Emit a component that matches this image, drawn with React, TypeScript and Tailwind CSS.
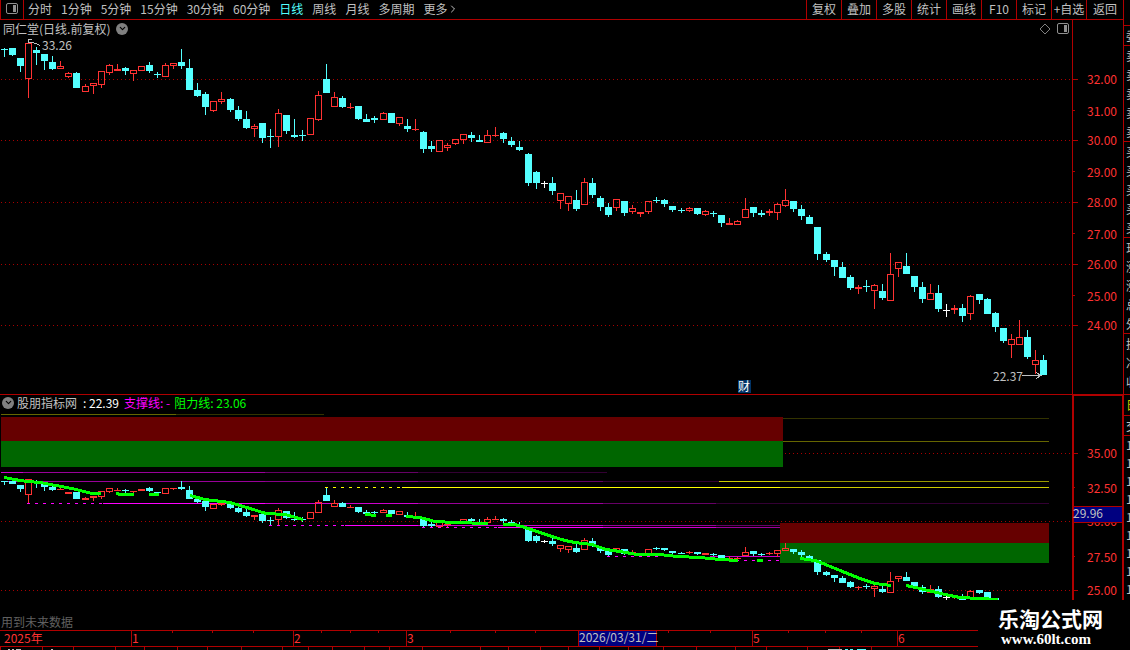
import type { ReactNode } from "react";
import { ChevronDown, ChevronRight } from "lucide-react";

const periods = [
  "分时",
  "1分钟",
  "5分钟",
  "15分钟",
  "30分钟",
  "60分钟",
  "日线",
  "周线",
  "月线",
  "多周期",
];

const tools = ["复权", "叠加", "多股", "统计", "画线", "F10", "标记", "+自选"];

// [wick top, wick bottom, body top, body bottom, kind]
type Kind = "u" | "d" | "w";
type Candle = [number, number, number, number, Kind];

const candles: Candle[] = [
  [48, 57, 49, 50, "d"],
  [48, 56, 48, 55, "d"],
  [58, 72, 58, 66, "d"],
  [43, 98, 43, 79, "u"],
  [47, 65, 50, 53, "d"],
  [54, 70, 54, 61, "d"],
  [56, 70, 62, 69, "d"],
  [61, 69, 66, 69, "u"],
  [72, 78, 73, 77, "u"],
  [72, 88, 73, 88, "d"],
  [84, 92, 86, 92, "u"],
  [83, 94, 83, 86, "u"],
  [71, 88, 71, 85, "u"],
  [64, 75, 65, 73, "u"],
  [64, 71, 69, 71, "u"],
  [67, 75, 68, 71, "d"],
  [70, 81, 70, 74, "u"],
  [66, 71, 66, 71, "u"],
  [62, 73, 65, 71, "d"],
  [72, 78, 74, 75, "d"],
  [63, 77, 65, 77, "u"],
  [63, 69, 63, 66, "u"],
  [49, 69, 62, 66, "d"],
  [59, 90, 68, 90, "d"],
  [83, 97, 90, 96, "d"],
  [92, 115, 94, 107, "d"],
  [101, 112, 101, 111, "u"],
  [92, 104, 99, 102, "u"],
  [98, 112, 99, 110, "d"],
  [106, 121, 110, 119, "d"],
  [111, 129, 119, 128, "d"],
  [124, 137, 126, 129, "u"],
  [123, 143, 123, 138, "d"],
  [129, 148, 136, 137, "d"],
  [109, 147, 113, 137, "u"],
  [115, 134, 115, 131, "d"],
  [119, 138, 135, 137, "d"],
  [130, 141, 135, 136, "d"],
  [118, 135, 118, 135, "u"],
  [91, 121, 95, 120, "u"],
  [64, 93, 79, 93, "d"],
  [92, 107, 97, 107, "u"],
  [96, 108, 98, 107, "d"],
  [103, 109, 107, 108, "u"],
  [106, 120, 106, 119, "d"],
  [114, 122, 119, 122, "d"],
  [116, 123, 118, 120, "d"],
  [112, 120, 113, 120, "u"],
  [113, 123, 113, 123, "d"],
  [117, 126, 117, 124, "u"],
  [119, 132, 126, 129, "d"],
  [119, 131, 129, 130, "u"],
  [131, 153, 132, 149, "d"],
  [141, 152, 146, 149, "d"],
  [140, 152, 140, 152, "u"],
  [143, 151, 145, 148, "u"],
  [139, 145, 139, 144, "u"],
  [134, 144, 134, 140, "u"],
  [132, 142, 135, 138, "d"],
  [135, 142, 140, 142, "d"],
  [130, 143, 135, 143, "u"],
  [127, 137, 135, 136, "u"],
  [132, 143, 133, 139, "d"],
  [137, 147, 141, 145, "d"],
  [141, 151, 147, 150, "d"],
  [153, 186, 154, 183, "d"],
  [171, 189, 172, 183, "d"],
  [181, 188, 183, 184, "w"],
  [177, 195, 183, 191, "d"],
  [193, 209, 193, 201, "u"],
  [196, 211, 196, 204, "u"],
  [190, 211, 200, 209, "d"],
  [178, 205, 182, 205, "u"],
  [178, 198, 183, 195, "d"],
  [196, 211, 198, 207, "d"],
  [203, 217, 207, 215, "d"],
  [199, 211, 199, 208, "u"],
  [201, 216, 201, 213, "d"],
  [205, 214, 208, 212, "u"],
  [212, 217, 212, 214, "u"],
  [201, 214, 201, 212, "u"],
  [197, 203, 200, 201, "d"],
  [199, 207, 200, 204, "d"],
  [206, 212, 206, 210, "d"],
  [208, 213, 210, 211, "d"],
  [207, 212, 208, 211, "u"],
  [208, 215, 208, 214, "d"],
  [210, 216, 211, 215, "u"],
  [211, 217, 213, 214, "d"],
  [215, 227, 215, 223, "d"],
  [218, 225, 223, 225, "u"],
  [220, 225, 221, 225, "u"],
  [198, 218, 209, 218, "u"],
  [207, 217, 207, 213, "d"],
  [210, 217, 213, 215, "d"],
  [209, 216, 211, 213, "u"],
  [203, 220, 204, 213, "u"],
  [189, 207, 200, 206, "u"],
  [201, 212, 201, 209, "d"],
  [205, 220, 209, 216, "d"],
  [215, 224, 217, 224, "d"],
  [227, 260, 227, 254, "d"],
  [252, 262, 254, 260, "d"],
  [260, 276, 260, 267, "d"],
  [262, 278, 267, 278, "d"],
  [275, 290, 277, 288, "d"],
  [285, 294, 287, 289, "u"],
  [280, 292, 286, 287, "d"],
  [284, 309, 285, 291, "u"],
  [284, 300, 291, 298, "d"],
  [253, 301, 274, 301, "u"],
  [262, 277, 262, 269, "u"],
  [253, 274, 266, 274, "d"],
  [276, 292, 276, 287, "d"],
  [282, 303, 287, 299, "d"],
  [284, 300, 293, 300, "u"],
  [285, 312, 293, 309, "d"],
  [304, 317, 310, 311, "w"],
  [305, 314, 308, 310, "u"],
  [304, 322, 308, 316, "d"],
  [295, 320, 296, 314, "u"],
  [294, 304, 294, 300, "d"],
  [298, 314, 299, 314, "d"],
  [312, 332, 313, 327, "d"],
  [328, 343, 328, 341, "d"],
  [334, 358, 339, 345, "u"],
  [320, 345, 337, 345, "u"],
  [330, 359, 337, 357, "d"],
  [350, 374, 360, 365, "u"],
  [355, 375, 360, 375, "d"],
];

const kindColor: Record<Kind, string> = {
  u: "#ff3232",
  d: "#54ffff",
  w: "#ffffff",
};

// [label, tick y, label baseline, major]
type Tick = [string, number, number, boolean];

const priceTicks: Tick[] = [
  ["32.00", 79, 84, true],
  ["31.00", 110, 116, false],
  ["30.00", 140, 145, true],
  ["29.00", 171, 177, false],
  ["28.00", 202, 207, true],
  ["27.00", 233, 239, false],
  ["26.00", 264, 269, true],
  ["25.00", 295, 301, false],
  ["24.00", 325, 330, true],
];

const indicatorTicks: Tick[] = [
  ["35.00", 453, 458, true],
  ["32.50", 487, 493, false],
  ["30.00", 521, 526, true],
  ["27.50", 556, 562, false],
  ["25.00", 590, 595, true],
];

// [x1, x2, y, color]
type Level = [number, number, number, string];

const levels: Level[] = [
  [1, 176, 414, "#666600"],
  [176, 324, 414, "#333300"],
  [783, 1049, 418, "#333300"],
  [783, 1049, 441, "#666600"],
  [1, 23, 472, "#cc00cc"],
  [23, 265, 472, "#990099"],
  [265, 418, 472, "#660066"],
  [418, 607, 472, "#330033"],
  [1, 23, 481, "#cc00cc"],
  [23, 265, 481, "#990099"],
  [265, 418, 481, "#880088"],
  [418, 603, 481, "#660066"],
  [603, 719, 481, "#330033"],
  [719, 780, 481, "#cccc00"],
  [780, 1049, 481, "#999900"],
  [402, 780, 487, "#ffff00"],
  [780, 1049, 487, "#cccc00"],
  [103, 265, 503, "#ff00ff"],
  [265, 418, 503, "#cc00cc"],
  [418, 603, 503, "#990099"],
  [603, 716, 503, "#660066"],
  [716, 1049, 503, "#330033"],
  [345, 418, 525, "#ff00ff"],
  [418, 603, 525, "#cc00cc"],
  [603, 716, 525, "#990099"],
  [716, 780, 525, "#660066"],
  [498, 603, 527, "#ff00ff"],
  [603, 716, 527, "#cc00cc"],
  [716, 780, 527, "#990099"],
  [710, 780, 556, "#cc00cc"],
];

const dashedLevels: Level[] = [
  [325, 401, 487, "#ffff00"],
  [27, 102, 503, "#ff00ff"],
  [269, 344, 525, "#ff00ff"],
  [422, 497, 527, "#ff00ff"],
  [607, 662, 556, "#ff00ff"],
  [728, 780, 560, "#ff00ff"],
];

const trendLines = [
  "4,477.5 20,480.5 28,481.5 40,482.5 72,488.5 92,493.5 101,493.5",
  "116,493.5 121,494.5 134,494.5",
  "149,494.5 159,494.5",
  "190,495.5 205,499.5 230,502.5 250,508.5 266,513.5 285,514.5 303,519.5",
  "365,514.5 376,515.5",
  "386,515.5 392,515.5",
  "406,516.5 420,517.5 435,521.5 455,522.5 488,523.5",
  "503,524.5 515,524.5 525,527.5 540,532.5 552,536.5 565,540.5 575,542.5 592,544.5 606,549.5 620,551.5 637,554.5 660,554.5 677,556.5 700,557.5 720,559.5 738,560.5",
  "757,560.5 763,560.5",
  "800,558.5 815,560.5 823,563.5 840,570.5 860,578.5 875,583.5 891,585.5",
  "906,585.5 920,588.5 945,594.5 960,597.5 980,598.5 998,599.5",
];

const months: [string, number][] = [
  ["1", 131],
  ["2", 293],
  ["3", 406],
  ["5", 752],
  ["6", 897],
];
const weekTicks = [172, 212, 253, 321, 350, 378, 450, 495, 535, 668, 710, 788, 825, 861];
const footTicks = [
  0, 42, 73, 115, 144, 177, 207, 241, 282, 308, 332, 364, 389, 422, 480, 508, 540, 568, 599, 628,
  663, 696, 735, 766, 807, 839, 871,
];

const toIndicator = (y: number) => Math.round(590.3 + (y - 295) * 0.443);

const Candles = ({ project = (y: number) => y }: { project?: (y: number) => number }) => (
  <g>
    {candles.map(([high, low, open, close, kind], i) => {
      const x = Math.round(4 + i * 8.054);
      const top = project(open);
      const bottom = Math.max(project(close), top + 1);
      const wickTop = project(high);
      const wickBottom = project(low);
      const color = kindColor[kind];
      const hollow = kind === "u" && bottom - top > 2;
      return (
        <g key={i} fill={color}>
          {wickTop < top && <rect x={x} y={wickTop} width={1} height={top - wickTop} />}
          {wickBottom > bottom && <rect x={x} y={bottom} width={1} height={wickBottom - bottom} />}
          {hollow ? (
            <rect x={x - 2.5} y={top + 0.5} width={6} height={bottom - top - 1} fill="none" stroke={color} />
          ) : (
            <rect x={x - 3} y={top} width={7} height={bottom - top} />
          )}
        </g>
      );
    })}
  </g>
);

const Grid = ({ ticks }: { ticks: Tick[] }) => (
  <g>
    {ticks.map(([label, y, , major]) =>
      major ? (
        <line key={label} x1={1} x2={1072} y1={y + 0.5} y2={y + 0.5} stroke="#a80000" strokeDasharray="1 3" />
      ) : null
    )}
  </g>
);

const AxisLabels = ({ ticks }: { ticks: Tick[] }) => (
  <g>
    {ticks.map(([label, y, baseline, major]) => (
      <g key={label}>
        <rect x={1073} y={y} width={major ? 5 : 2} height={1} fill="#b00000" />
        <text x={1087} y={baseline} fill="#ff3232">
          {label}
        </text>
      </g>
    ))}
  </g>
);

const MenuDot = ({ label }: { label: string }) => (
  <button aria-label={label} className="flex size-3 items-center justify-center rounded-full bg-[#808080] text-black">
    <ChevronDown size={9} strokeWidth={3} />
  </button>
);

const PanelIcon = ({ color }: { color: string }) => (
  <svg width="12" height="11" viewBox="0 0 12 11" fill="none">
    <rect x="0.5" y="0.5" width="11" height="10" rx="1.5" stroke={color} />
    <rect x="7" y="2" width="3" height="7" fill={color} />
  </svg>
);

const PriceChart = () => (
  <svg viewBox="0 39 1123 355" className="block h-auto w-full text-[12px]" shapeRendering="crispEdges">
    <Grid ticks={priceTicks} />
    <rect x={1072} y={39} width={1} height={355} fill="#b00000" />
    <AxisLabels ticks={priceTicks} />
    <Candles />

    {/* highest and lowest price */}
    <path d="M32 39.5H28.5V43M28 42.5H32L36 43.5L40 45.5" stroke="#c0c0c0" fill="none" />
    <text x={42} y={50} fill="#c0c0c0">33.26</text>
    <text x={993} y={381} fill="#c0c0c0">22.37</text>
    <path d="M1022 375.5H1041M1036 372.5L1041 375.5L1036 378.5" stroke="#c0c0c0" fill="none" />

    {/* earnings marker */}
    <rect x={738} y={380} width={13} height={13} fill="#003366" />
    <text x={738} y={391} fill="#ffffff">财</text>
  </svg>
);

const IndicatorChart = () => (
  <svg viewBox="0 412 1123 203" className="block h-auto w-full text-[12px]" shapeRendering="crispEdges">
    <Grid ticks={indicatorTicks} />
    <rect x={1} y={417} width={782} height={24} fill="#660000" />
    <rect x={1} y={441} width={782} height={26} fill="#006600" />
    <rect x={780} y={523} width={269} height={20} fill="#660000" />
    <rect x={780} y={543} width={269} height={20} fill="#006600" />
    {levels.map(([x1, x2, y, color]) => (
      <rect key={`${x1}-${y}`} x={x1} y={y} width={x2 - x1} height={1} fill={color} />
    ))}
    {dashedLevels.map(([x1, x2, y, color]) => (
      <line key={`${x1}-${y}`} x1={x1} x2={x2} y1={y + 0.5} y2={y + 0.5} stroke={color} strokeDasharray="3 5" />
    ))}
    <Candles project={toIndicator} />
    {trendLines.map((points) => (
      <polyline key={points} points={points} fill="none" stroke="#00ff00" strokeWidth={3} />
    ))}
    <rect x={0} y={600} width={1123} height={15} fill="#000000" />
    <rect x={1072} y={412} width={2} height={188} fill="#b00000" />
    <rect x={1122} y={412} width={1} height={188} fill="#b00000" />
    <AxisLabels ticks={indicatorTicks} />

    {/* cursor value */}
    <rect x={1074} y={506} width={48} height={17} fill="#b00000" />
    <rect x={1074} y={507} width={48} height={15} fill="#000080" />
    <text x={1073} y={518} fill="#c0c0c0">29.96</text>
  </svg>
);

const DateAxis = () => (
  <svg viewBox="0 630 1123 20" className="block h-auto w-full text-[12px]" shapeRendering="crispEdges">
    <rect x={0} y={630} width={1123} height={1} fill="#b00000" />
    <rect x={0} y={646} width={1123} height={1} fill="#b00000" />
    <text x={4} y={643} fill="#ff3232">2025年</text>
    {months.map(([label, x]) => (
      <g key={label}>
        <rect x={x} y={630} width={1} height={16} fill="#b00000" />
        <text x={x + 1} y={643} fill="#ff3232">{label}</text>
      </g>
    ))}
    {weekTicks.map((x) => (
      <rect key={x} x={x} y={631} width={1} height={2} fill="#b00000" />
    ))}
    {footTicks.map((x) => (
      <rect key={x} x={x} y={647} width={1} height={3} fill="#b00000" />
    ))}
    <path d="M8 649.5H10M12 649.5H14M16 649.5H21M51 649.5H53M828 649.5H842" stroke="#c0c0c0" />
    <path d="M845 649.5H848M850 649.5H853M857 649.5H866" stroke="#54ffff" />
    <rect x={578} y={631} width={79} height={15} fill="#b00000" />
    <rect x={579} y={631} width={77} height={15} fill="#000080" />
    <text x={579} y={642} fill="#c0c0c0">2026/03/31/二</text>
  </svg>
);

// One block of the quote column at the window's right edge
const QuoteBlock = ({ children }: { children: ReactNode }) => (
  <div className="border-t border-[#b00000] pl-0.5">{children}</div>
);

const QuoteRows = ({ rows }: { rows: string[] }) => (
  <>
    {rows.map((row, i) => (
      <p key={i} className="h-[19px] leading-[19px]">
        {row}
      </p>
    ))}
  </>
);

const QuoteColumn = () => (
  <aside className="w-[7px] shrink-0 overflow-hidden border-l border-[#b00000] pt-[25px] whitespace-nowrap">
    <QuoteBlock>
      <QuoteRows rows={["委"]} />
    </QuoteBlock>
    <QuoteBlock>
      <QuoteRows rows={["卖", "卖", "卖", "卖", "卖"]} />
    </QuoteBlock>
    <QuoteBlock>
      <QuoteRows rows={["买", "买", "买", "买", "买"]} />
    </QuoteBlock>
    <QuoteBlock>
      <QuoteRows rows={["现", "涨", "涨", "总", "外"]} />
    </QuoteBlock>
    <QuoteBlock>
      <div className="pb-[3px]">
        <QuoteRows rows={["换", "净", "收"]} />
      </div>
    </QuoteBlock>
    <QuoteBlock>
      <p className="h-5 leading-5 text-[#cccc00]">日</p>
    </QuoteBlock>
    <QuoteBlock>
      <QuoteRows rows={["交"]} />
    </QuoteBlock>
    <QuoteBlock>
      {Array.from({ length: 9 }, (_, i) => (
        <p key={i} className="h-[18px] leading-[18px]">
          14
        </p>
      ))}
    </QuoteBlock>
  </aside>
);

const Toolbar = () => (
  <header className="flex h-5 items-stretch justify-between border-b border-[#b00000]">
    <nav className="flex items-center gap-[9px]">
      <button
        aria-label="侧栏"
        className="mr-[-5px] flex h-full w-6 items-center justify-center border-x border-[#b00000] pb-0.5"
      >
        <PanelIcon color="#909090" />
      </button>
      {periods.map((period) => (
        <button key={period} className={period === "日线" ? "pb-0.5 text-[#54ffff]" : "pb-0.5"}>
          {period}
        </button>
      ))}
      <button className="flex items-center pb-0.5">
        更多
        <ChevronRight size={12} strokeWidth={2} />
      </button>
    </nav>
    <div className="flex">
      {tools.map((tool) => (
        <button key={tool} className="w-[35px] border-l border-[#b00000] pb-0.5 whitespace-nowrap">
          {tool}
        </button>
      ))}
      <button className="w-[37px] border-l border-[#b00000] pb-0.5">返回</button>
    </div>
  </header>
);

export default function App() {
  return (
    <div className="relative flex min-h-screen overflow-hidden bg-black font-['Noto_Sans_CJK_SC',sans-serif] text-[12px] leading-[18px] text-[#c0c0c0]">
      <main className="min-w-0 flex-1">
        <Toolbar />

        {/* Price chart */}
        <section>
          <div className="flex h-[19px]">
            <div className="flex flex-1 items-center pb-0.5">
              <h1 className="pr-1.5 pl-[3px]">同仁堂(日线.前复权)</h1>
              <MenuDot label="股票菜单" />
              <div className="ml-auto flex items-center gap-1.5 pr-[3px]">
                <svg width="12" height="12" viewBox="0 0 12 12" fill="none">
                  <path d="M6 1L11 6L6 11L1 6Z" stroke="#808080" />
                </svg>
                <PanelIcon color="#909090" />
              </div>
            </div>
            <div className="w-[51px] border-l border-[#b00000]" />
          </div>
          <PriceChart />
        </section>

        {/* Indicator chart */}
        <section className="border-t border-[#b00000]">
          <div className="flex h-[17px] leading-[15px]">
            <div className="flex items-center pb-0.5 pl-0.5">
              <MenuDot label="指标菜单" />
              <h2 className="pl-[3px]">股朋指标网</h2>
              <span className="pl-1.5 text-white">: 22.39</span>
              <span className="pl-[5px] text-[#ff00ff]">支撑线: -</span>
              <span className="pl-1 text-[#00ff00]">阻力线: 23.06</span>
            </div>
            <div className="ml-auto w-[51px] border-t border-r border-l-2 border-[#b00000]" />
          </div>
          <IndicatorChart />
          <p className="h-[15px] pl-px leading-[13px] text-[#606060]">用到未来数据</p>
          <DateAxis />
        </section>
      </main>

      <QuoteColumn />

      {/* Site mark over the lower right corner */}
      <div className="absolute right-0 bottom-0 h-[50px] w-[152px] bg-black pt-1.5 pl-5 text-white">
        <p className="text-[21px] leading-[24px] font-bold">乐淘公式网</p>
        <p className="pl-[3px] font-['Liberation_Serif',serif] text-[15px] leading-[18px] font-bold">www.60lt.com</p>
      </div>
    </div>
  );
}
